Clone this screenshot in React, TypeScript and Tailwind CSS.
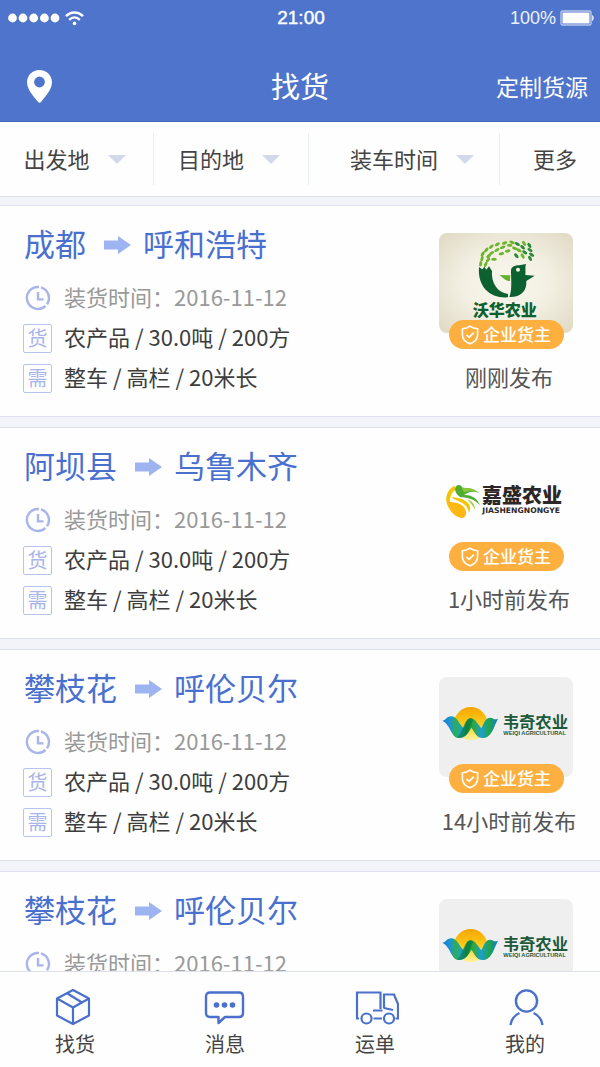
import type { ReactNode } from 'react'

type Cargo = {
  id: number
  from: string
  to: string
  date: string
  goods: string
  need: string
  published: string
  logo: ReactNode
}

// x, y, angle
const lightLeaves = [
  [182, 131, 100], [197, 133, 115], [186, 116, 110], [204, 120, 135], [188, 102, 120], [206, 108, 140],
  [222, 118, 0], [199, 90, 130], [215, 99, 150], [214, 80, 140], [231, 90, 150], [244, 101, 170],
  [232, 73, 150], [248, 82, 160], [263, 93, 170], [254, 69, 160], [269, 76, 0], [284, 85, 20],
]
const darkLeaves = [
  [276, 67, 20], [292, 72, 30], [308, 82, 40], [297, 91, 30], [314, 97, 35], [330, 90, 30],
  [312, 70, 60], [328, 76, 60], [335, 104, 35], [308, 108, 60], [330, 115, 60], [289, 107, 50],
]

function WohuaLogo() {
  return (
    <svg viewBox="57 39 402 300" className="w-full h-full" role="img" aria-label="沃华农业">
      <defs>
        <radialGradient id="wohua-bg" cx="50%" cy="50%" r="65%">
          <stop offset="0" stopColor="#f8f6ec" />
          <stop offset="0.5" stopColor="#f3f0e3" />
          <stop offset="1" stopColor="#e2dcc7" />
        </radialGradient>
      </defs>
      <rect x="57" y="39" width="402" height="300" fill="url(#wohua-bg)" />
      {lightLeaves.map(([x, y, r]) => (
        <ellipse key={`${x}-${y}`} cx={x} cy={y} rx="8.5" ry="4.6" transform={`rotate(${r} ${x} ${y})`} fill="#6fb52c" />
      ))}
      {darkLeaves.map(([x, y, r], i) => (
        <ellipse key={`${x}-${y}`} cx={x} cy={y} rx="8.5" ry="4.6" transform={`rotate(${r} ${x} ${y})`} fill={i % 3 ? '#2a8a35' : '#6fb52c'} />
      ))}
      <path d="M177 141 L187 148 L193 140 L199 149 L207 139 L216 153 C213 188 232 218 264 222 L264 232 C212 236 172 202 177 141Z" fill="#0d6131" />
      <path d="M273 152 C273 140 284 136 298 136 L318 132 C314 142 318 154 316 165 L344 167 L319 183 C321 214 302 232 268 231 C277 208 273 180 273 152Z" fill="#0d6131" />
      <circle cx="294" cy="149" r="6" fill="#f6f3e7" />
      <path d="M239 165 L271 166 L270 183 C257 183 250 175 239 165Z" fill="#63b32e" />
      <text x="158" y="289" fontSize="48" fontWeight="900" fill="#0d6131">沃华农业</text>
    </svg>
  )
}

function JiashengLogo() {
  return (
    <svg viewBox="57 -15 402 300" className="w-full h-full" role="img" aria-label="嘉盛农业">
      <path d="M104 77 C74 92 72 130 92 148 C86 122 90 100 108 88Z" fill="#f5c400" />
      <path d="M82 122 C98 130 118 124 132 142 C142 156 140 170 128 174 C104 172 84 152 82 122Z" fill="#fdb813" />
      <path d="M94 112 C110 126 140 124 147 158 C160 136 136 112 94 112Z" fill="#f5c400" />
      <path d="M105 88 C106 74 118 72 124 78 C127 90 150 76 177 98 C154 91 144 97 132 105 C150 103 172 112 180 136 C164 118 142 112 122 112 C112 107 107 100 105 88Z" fill="#4fae32" />
      <path d="M126 84 C140 85 152 80 177 98 C156 89 142 94 132 98Z" fill="#8cc63f" />
      <path d="M142 118 C158 124 164 134 166 149 C156 136 152 128 142 118Z" fill="#a5ce39" />
      <text x="186" y="129" fontSize="60" fontWeight="900" fill="#2d2626">嘉盛农业</text>
      <text x="187" y="160" fontSize="23" fontWeight="700" fill="#2d2626" fontFamily="DejaVu Sans, sans-serif">JIASHENGNONGYE</text>
    </svg>
  )
}

function WeiqiLogo({ id }: { id: string }) {
  return (
    <svg viewBox="57 25 402 300" className="w-full h-full" role="img" aria-label="韦奇农业">
      <defs>
        <linearGradient id={`${id}-sun`} x1="0" y1="0" x2="0" y2="1">
          <stop offset="0" stopColor="#f6a400" />
          <stop offset="0.5" stopColor="#fccc1c" />
          <stop offset="1" stopColor="#fff3a0" />
        </linearGradient>
        <linearGradient id={`${id}-wave`} x1="0" y1="0" x2="1" y2="0">
          <stop offset="0" stopColor="#1479d0" />
          <stop offset="0.14" stopColor="#1f93d6" />
          <stop offset="0.24" stopColor="#2bb04e" />
          <stop offset="0.34" stopColor="#1b9fd0" />
          <stop offset="0.44" stopColor="#0b8a45" />
          <stop offset="0.56" stopColor="#2fa93d" />
          <stop offset="0.7" stopColor="#1b9fd0" />
          <stop offset="0.84" stopColor="#1fa64a" />
          <stop offset="1" stopColor="#1479d0" />
        </linearGradient>
      </defs>
      <rect x="57" y="25" width="402" height="300" fill="#efefef" />
      <circle cx="152" cy="165" r="50" fill={`url(#${id}-sun)`} />
      <path
        d="M67 156 C77 156 80 143 93 143 C112 143 116 165 131 179 C138 163 141 149 152 149 C166 149 172 166 184 179 C192 164 196 147 210 147 C220 147 222 156 234 150 C222 172 216 208 188 208 C168 208 164 188 154 177 C146 190 138 208 118 208 C92 208 94 170 67 156Z"
        fill={`url(#${id}-wave)`}
      />
      <path d="M110 206 C128 200 130 150 152 149 C156 150 158 152 160 154 C150 170 142 208 118 208Z" fill="#0b7a40" opacity="0.6" />
      <text x="248" y="179" fontSize="49" fontWeight="700" fill="#1d5a3a">韦奇农业</text>
      <text x="250" y="200" fontSize="17" fontWeight="700" fill="#1d5a3a" fontFamily="Liberation Sans, sans-serif">WEIQI AGRICULTURAL</text>
    </svg>
  )
}

const cargos: Cargo[] = [
  { id: 1, from: '成都', to: '呼和浩特', date: '2016-11-12', goods: '农产品 / 30.0吨 / 200方', need: '整车 / 高栏 / 20米长', published: '刚刚发布', logo: <WohuaLogo /> },
  { id: 2, from: '阿坝县', to: '乌鲁木齐', date: '2016-11-12', goods: '农产品 / 30.0吨 / 200方', need: '整车 / 高栏 / 20米长', published: '1小时前发布', logo: <JiashengLogo /> },
  { id: 3, from: '攀枝花', to: '呼伦贝尔', date: '2016-11-12', goods: '农产品 / 30.0吨 / 200方', need: '整车 / 高栏 / 20米长', published: '14小时前发布', logo: <WeiqiLogo id="weiqi-a" /> },
  { id: 4, from: '攀枝花', to: '呼伦贝尔', date: '2016-11-12', goods: '农产品 / 30.0吨 / 200方', need: '整车 / 高栏 / 20米长', published: '14小时前发布', logo: <WeiqiLogo id="weiqi-b" /> },
]

function StatusBar() {
  return (
    <div className="h-9 pl-2 pr-1.5 flex items-center justify-between font-['Liberation_Sans',sans-serif]">
      <div className="flex-1 flex items-center gap-1">
        <svg width="53" height="10" viewBox="0 0 53 10" fill="#fff">
          <circle cx="4.5" cy="5" r="4.4" />
          <circle cx="15" cy="5" r="4.4" />
          <circle cx="25.7" cy="5" r="4.4" />
          <circle cx="36.4" cy="5" r="4.4" />
          <circle cx="47" cy="5" r="4.4" />
        </svg>
        <svg width="19" height="15" viewBox="0 0 19 15" fill="none" stroke="#fff" strokeWidth="2.4">
          <path d="M1 5.2 C6 0.2 13 0.2 18 5.2" />
          <path d="M4.2 8.8 C7.4 5.8 11.6 5.8 14.8 8.8" />
          <circle cx="9.5" cy="12.4" r="1.8" fill="#fff" stroke="none" />
        </svg>
      </div>
      <span className="text-[19px] [-webkit-text-stroke:0.4px_white]">21:00</span>
      <div className="flex-1 flex items-center justify-end gap-1 text-lg">
        <span className="text-white/90">100%</span>
        <svg width="34" height="16" viewBox="0 0 34 16">
          <rect x="1" y="1" width="30" height="14" rx="1.5" fill="none" stroke="#b9c8ec" strokeWidth="1.4" />
          <rect x="2.5" y="2.5" width="27" height="11" fill="#fff" />
          <path d="M32 5 C34.4 6 34.4 10 32 11Z" fill="#dfe6f7" />
        </svg>
      </div>
    </div>
  )
}

function Filter({ label, arrow = true, className = '' }: { label: string; arrow?: boolean; className?: string }) {
  return (
    <button className={`h-[52px] flex items-center justify-center gap-[18px] text-[22px] text-[#444] ${className}`}>
      <span className="pb-0.5">{label}</span>
      {arrow && (
        <svg width="18" height="9" viewBox="0 0 18 9" fill="#d3d8ea">
          <path d="M0 0H18L9 9Z" />
        </svg>
      )}
    </button>
  )
}

function ClockIcon() {
  return (
    <svg width="26" height="26" viewBox="0 0 26 26" fill="none" stroke="#a9b5ea" strokeWidth="2.4">
      <path d="M14 2 A11 11 0 1 0 20.4 21" />
      <path d="M16 2.4 A11 11 0 0 1 22 19.2" />
      <path d="M13 7 V14.4 H18.5" />
    </svg>
  )
}

function Tag({ children }: { children: string }) {
  return (
    <span className="w-[29px] h-[29px] flex items-center justify-center border border-[#b9c3f2] rounded-xs text-xl leading-none text-[#a9b5ea]">
      {children}
    </span>
  )
}

function CargoCard({ cargo }: { cargo: Cargo }) {
  return (
    <li className="flex justify-between bg-[#fefefe] border-y border-[#dde1ee] pt-4 pb-[18px] pl-[23px] pr-[27px]">
      <div>
        <h2 className="h-[46px] pl-px flex items-center text-[31px] text-[#4a70cf]">
          <span className="pb-1">{cargo.from}</span>
          <svg width="27" height="18" viewBox="0 0 27 18" className="ml-[18px] mr-3" fill="#9db4f1">
            <path d="M0 4.5H14V0L27 9L14 18V13.5H0Z" />
          </svg>
          <span className="pb-1">{cargo.to}</span>
        </h2>
        <div className="mt-2.5 text-[22px] text-[#3d3d3d]">
          <p className="h-10 flex items-center gap-3 text-[#999]">
            <span className="w-[29px] flex justify-center"><ClockIcon /></span>
            <span className="pb-1">装货时间：{cargo.date}</span>
          </p>
          <p className="h-10 flex items-center gap-3">
            <Tag>货</Tag>
            <span className="pb-1">{cargo.goods}</span>
          </p>
          <p className="h-10 flex items-center gap-3">
            <Tag>需</Tag>
            <span className="pb-1">{cargo.need}</span>
          </p>
        </div>
      </div>
      <div className="w-[134px] pt-[11px] flex flex-col items-center shrink-0">
        <div className="w-full h-[100px] rounded-lg overflow-hidden">{cargo.logo}</div>
        <span className="relative -mt-[13px] w-[115px] h-[29px] rounded-full bg-[#fdb040] text-white text-[17px] font-medium flex items-center justify-center gap-1">
          <svg width="18" height="20" viewBox="0 0 18 20" fill="none" stroke="#fff" strokeWidth="1.6">
            <path d="M9 1.2 C11.5 3 14 3.6 16.6 3.8 V10 C16.6 14.4 13 17.2 9 18.8 C5 17.2 1.4 14.4 1.4 10 V3.8 C4 3.6 6.5 3 9 1.2Z" />
            <path d="M5.5 9.8 L8.2 12.4 L12.8 7.6" />
          </svg>
          <span className="pb-0.5">企业货主</span>
        </span>
        <span className="mt-[11px] pl-1.5 text-[22px] text-[#555] whitespace-nowrap">{cargo.published}</span>
      </div>
    </li>
  )
}

function NavItem({ label, children }: { label: string; children: ReactNode }) {
  return (
    <a href="#" className="flex-1 flex flex-col items-center pt-4 text-xl text-[#444]">
      <svg width="48" height="38" viewBox="0 0 48 38" fill="none" stroke="#4a70cb" strokeWidth="2.4" strokeLinejoin="round">
        {children}
      </svg>
      <span className="mt-1">{label}</span>
    </a>
  )
}

export default function App() {
  return (
    <div className="h-screen flex flex-col bg-[#f2f4fa] font-['Noto_Sans_CJK_SC',sans-serif]">
      <header className="bg-[#4f74cb] border-b border-[#4468bd] text-white">
        <StatusBar />
        <div className="h-[85px] pt-4 px-3 flex items-center">
          <div className="flex-1 flex">
            <button aria-label="定位" className="ml-[15px]">
              <svg width="25" height="33" viewBox="0 0 25 33" fill="#fff">
                <path fillRule="evenodd" d="M12.5 0 C5.6 0 0 5.4 0 12.2 C0 20 8 28 11 32 Q12.5 33.6 14 32 C17 28 25 20 25 12.2 C25 5.4 19.4 0 12.5 0Z M12.5 6.6 A5.4 5.4 0 1 1 12.5 17.4 A5.4 5.4 0 1 1 12.5 6.6Z" />
              </svg>
            </button>
          </div>
          <h1 className="text-[29px] pb-0.5">找货</h1>
          <div className="flex-1 flex justify-end">
            <button className="text-[23px]">定制货源</button>
          </div>
        </div>
      </header>

      <div className="grid grid-cols-[154fr_155fr_191fr_100fr] py-[11px] bg-[#fefefe] border-b border-[#dde1ee] divide-x divide-[#e9edf7]">
        <Filter label="出发地" className="pr-1" />
        <Filter label="目的地" className="pr-1" />
        <Filter label="装车时间" className="pl-4" />
        <Filter label="更多" arrow={false} className="pl-2.5" />
      </div>

      <ul className="flex-1 min-h-0 overflow-y-auto [scrollbar-width:none] pt-2 flex flex-col gap-2.5">
        {cargos.map(cargo => <CargoCard key={cargo.id} cargo={cargo} />)}
      </ul>

      <nav className="h-24 flex bg-[#fefefe] border-t border-[#dde1ee]">
        <NavItem label="找货">
          <path d="M22 2 L38 10.5 V27.5 L22 36 L6 27.5 V10.5Z M6 10.5 L22 19.5 L38 10.5 M22 19.5 V36 M16.5 5.5 L31 14.5" strokeWidth="2.2" />
        </NavItem>
        <NavItem label="消息">
          <path d="M9 4.5 H38 Q42 4.5 42 8.5 V25 Q42 29 38 29 H24 L17.5 35 V29 H9 Q5 29 5 25 V8.5 Q5 4.5 9 4.5Z" />
          <g fill="#4a70cb" stroke="none">
            <circle cx="15.5" cy="17" r="2.8" />
            <circle cx="23.5" cy="17" r="2.8" />
            <circle cx="31.5" cy="17" r="2.8" />
          </g>
        </NavItem>
        <NavItem label="运单">
          <g strokeWidth="2.2" strokeLinejoin="miter">
            <path d="M8 30.5 H6 V4.5 H29.5 V21" />
            <path d="M33 20.5 V6.5 H43 L47 16 V30.5 H44.5" />
            <path d="M33 20 L42 22 M22 22.5 H31.5 M22.5 30.5 H31" />
            <circle cx="15.5" cy="30.5" r="5" />
            <circle cx="38" cy="30.5" r="5" />
          </g>
        </NavItem>
        <NavItem label="我的">
          <circle cx="25.5" cy="13" r="10.6" />
          <path d="M9.5 37 C10.5 31 13.5 27 18.5 25 M41.5 37 C40.5 31 37.5 27 32.5 25" />
        </NavItem>
      </nav>
    </div>
  )
}
